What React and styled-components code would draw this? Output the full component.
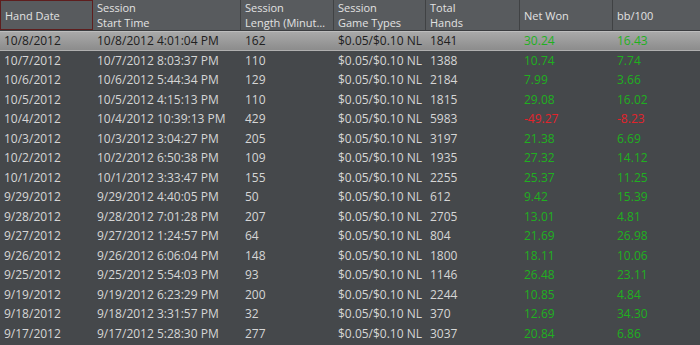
import React from "react";
import styled, { createGlobalStyle } from "styled-components";

const GlobalStyle = createGlobalStyle`
  html, body {
    margin: 0;
    padding: 0;
    background: #45484b;
  }
  body {
    font-family: "Open Sans", "Noto Sans", sans-serif;
  }
`;

const columns = [
  { key: "date", label: ["Hand Date"], width: 93 },
  { key: "start", label: ["Session", "Start Time"], width: 148 },
  { key: "length", label: ["Session", "Length (Minut…"], width: 93 },
  { key: "types", label: ["Session", "Game Types"], width: 92 },
  { key: "hands", label: ["Total", "Hands"], width: 94 },
  { key: "won", label: ["Net Won"], width: 93 },
  { key: "bb", label: ["bb/100"], width: 87 },
];

const rows = [
  ["10/8/2012", "10/8/2012 4:01:04 PM", "162", "1841", "30.24", "16.43"],
  ["10/7/2012", "10/7/2012 8:03:37 PM", "110", "1388", "10.74", "7.74"],
  ["10/6/2012", "10/6/2012 5:44:34 PM", "129", "2184", "7.99", "3.66"],
  ["10/5/2012", "10/5/2012 4:15:13 PM", "110", "1815", "29.08", "16.02"],
  ["10/4/2012", "10/4/2012 10:39:13 PM", "429", "5983", "-49.27", "-8.23"],
  ["10/3/2012", "10/3/2012 3:04:27 PM", "205", "3197", "21.38", "6.69"],
  ["10/2/2012", "10/2/2012 6:50:38 PM", "109", "1935", "27.32", "14.12"],
  ["10/1/2012", "10/1/2012 3:33:47 PM", "155", "2255", "25.37", "11.25"],
  ["9/29/2012", "9/29/2012 4:40:05 PM", "50", "612", "9.42", "15.39"],
  ["9/28/2012", "9/28/2012 7:01:28 PM", "207", "2705", "13.01", "4.81"],
  ["9/27/2012", "9/27/2012 1:24:57 PM", "64", "804", "21.69", "26.98"],
  ["9/26/2012", "9/26/2012 6:06:04 PM", "148", "1800", "18.11", "10.06"],
  ["9/25/2012", "9/25/2012 5:54:03 PM", "93", "1146", "26.48", "23.11"],
  ["9/19/2012", "9/19/2012 6:23:29 PM", "200", "2244", "10.85", "4.84"],
  ["9/18/2012", "9/18/2012 3:31:57 PM", "32", "370", "12.69", "34.30"],
  ["9/17/2012", "9/17/2012 5:28:30 PM", "277", "3037", "20.84", "6.86"],
];

const gridCols = columns.map((c) => `${c.width}px`).join(" ");

const App = () => {
  const money = (v) => (v.startsWith("-") ? "loss" : "win");

  return (
    <>
      <GlobalStyle />
      <Grid>
        <Header>
          {columns.map((c, i) => (
            <HeadCell key={c.key} sorted={i === 0} last={i === columns.length - 1}>
              {c.label.map((line) => (
                <HeadLine key={line}>{line}</HeadLine>
              ))}
            </HeadCell>
          ))}
        </Header>
        {rows.map((r, i) => (
          <Row key={r[0]} selected={i === 0}>
            <Cell>{r[0]}</Cell>
            <Cell>{r[1]}</Cell>
            <Cell>{r[2]}</Cell>
            <Cell>$0.05/$0.10 NL</Cell>
            <Cell>{r[3]}</Cell>
            <Cell tone={money(r[4])}>{r[4]}</Cell>
            <Cell tone={money(r[5])}>{r[5]}</Cell>
          </Row>
        ))}
      </Grid>
    </>
  );
};

export default App;

const Grid = styled.div`
  width: 700px;
  height: 345px;
  overflow: hidden;
  background: #45484b;
  font-size: 12px;
`;

const Header = styled.div`
  display: grid;
  grid-template-columns: ${gridCols};
  height: 31px;
  background: #585b5e;
  border-bottom: 1px solid #3b3d40;
  box-sizing: border-box;
`;

const HeadCell = styled.div.withConfig({
  shouldForwardProp: (p) => !["sorted", "last"].includes(p),
})`
  display: flex;
  flex-direction: column;
  justify-content: center;
  padding-left: 4px;
  box-sizing: border-box;
  color: #e2e2e2;
  font-size: 11px;
  white-space: nowrap;
  overflow: hidden;
  border-right: ${(p) => (p.last ? "none" : "1px solid #404244")};
  border: ${(p) => (p.sorted ? "1px solid #5e1e1e" : undefined)};
`;

const HeadLine = styled.span`
  display: block;
  line-height: 15px;
  height: 15px;
`;

const Row = styled.div.withConfig({
  shouldForwardProp: (p) => p !== "selected",
})`
  display: grid;
  grid-template-columns: ${gridCols};
  height: 19.5px;
  align-items: center;
  box-sizing: border-box;
  color: ${(p) => (p.selected ? "#202020" : "#d6d6d6")};
  background: ${(p) =>
    p.selected ? "linear-gradient(#a9a9a9, #8c8c8c)" : "transparent"};
  border-top: ${(p) => (p.selected ? "1px solid #bdbdbd" : "none")};
  border-bottom: ${(p) => (p.selected ? "1px solid #b0b0b0" : "none")};
`;

const Cell = styled.div`
  padding-left: 4px;
  white-space: nowrap;
  overflow: hidden;
  color: ${(p) =>
    p.tone === "win" ? "#1fb01f" : p.tone === "loss" ? "#e3232b" : "inherit"};
`;
